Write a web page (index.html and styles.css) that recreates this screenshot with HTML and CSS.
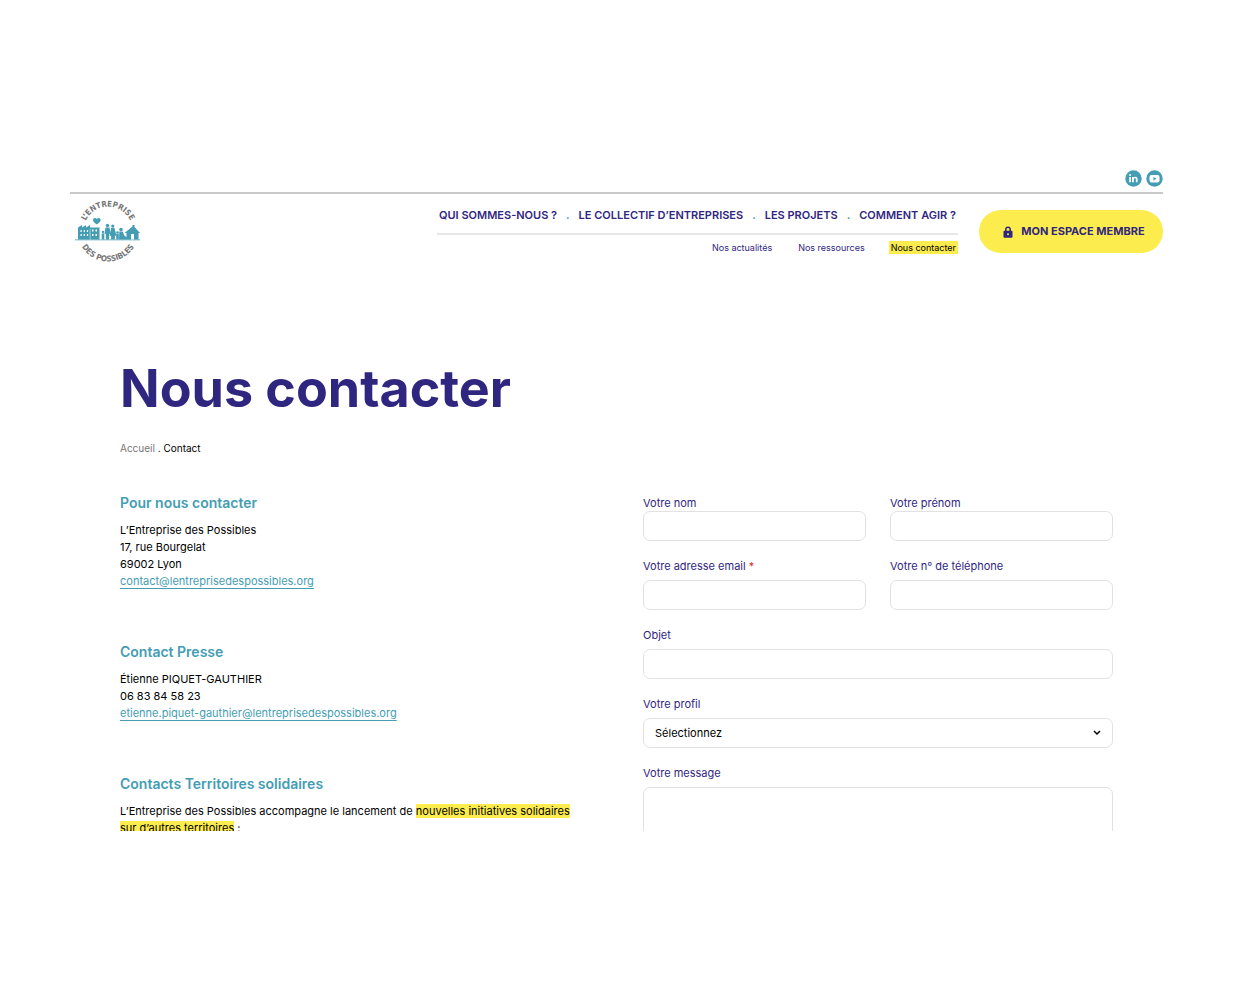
FILE: index.html
```html
<!DOCTYPE html>
<html lang="fr">
<head>
  <meta charset="UTF-8">
  <meta name="viewport" content="width=device-width, initial-scale=1">
  <title>Nous contacter - L’Entreprise des Possibles</title>
  <link rel="stylesheet" href="styles.css">
</head>
<body>
  <div class="page">
    <header>
      <div class="social">
        <a href="#" aria-label="LinkedIn">
          <svg viewBox="0 0 17 17" width="17" height="17">
            <circle cx="8.5" cy="8.5" r="8.2" fill="#449db3"/>
            <path d="M4.2 7h1.7v5.2H4.2zM7 7h1.6v.7c.4-.6 1-.9 1.8-.9 1.600 0 2.200 1 2.200 2.500v2.900h-1.700V9.600c0-.8-.2-1.300-.9-1.300-.8 0-1.200.5-1.200 1.400v2.500H7z" fill="#fff"/>
            <circle cx="5.050" cy="5.100" r="1" fill="#fff"/>
          </svg>
        </a>
        <a href="#" aria-label="YouTube">
          <svg viewBox="0 0 17 17" width="17" height="17">
            <circle cx="8.5" cy="8.5" r="8.2" fill="#449db3"/>
            <rect x="3.500" y="5" width="10" height="7.400" rx="2" fill="#fff"/>
            <path d="M7.400 7l3 1.700-3 1.700z" fill="#449db3"/>
          </svg>
        </a>
      </div>

      <div class="bar">
        <a class="logo" href="#" aria-label="L’Entreprise des Possibles">
          <svg viewBox="0 0 68 66" width="68" height="66">
            <defs>
              <path id="arcTop" d="M9.500 31a24.500 24.500 0 0 1 49 0"/>
              <path id="arcBottom" d="M3.500 31a30.500 30.500 0 0 0 61 0"/>
            </defs>
            <text class="logo-text"><textPath href="#arcTop" startOffset="50%">L’ENTREPRISE</textPath></text>
            <text class="logo-text"><textPath href="#arcBottom" startOffset="50%">DES POSSIBLES</textPath></text>
            <g fill="#449db3">
              <path d="M22.800 24.500c-2.500-2-3.800-3-3.800-4.600 0-2.200 2.800-2.700 3.800-.9 1-1.800 3.800-1.300 3.800.9 0 1.600-1.300 2.600-3.800 4.600z"/>
              <path d="M1 39.500h65v.8H1z"/>
              <path d="M4 39.500V27.500l4-2.500v2.500l4-2.500v2.500l4-2.500v2.500h9.500v12z"/>
              <!-- famille -->
              <circle cx="33.500" cy="25.500" r="1.700"/>
              <path d="M31.500 27.500h4l1 6-1.200.5-.3 5.500h-3l-.3-5.500-1.200-.5z"/>
              <circle cx="38.800" cy="26" r="1.600"/>
              <path d="M37.200 27.800h3.200l2.100 8h-1.600v3.700h-3.800v-3.700h-1.500z"/>
              <circle cx="29" cy="32" r="1.200"/>
              <path d="M27.700 33.500h2.600v6h-2.600z"/>
              <circle cx="43.500" cy="32.500" r="1.300"/>
              <path d="M42.200 33.800h2.600v5.700h-2.600z"/>
              <circle cx="47" cy="29.500" r="1.800"/>
              <path d="M45.300 31.500h3.300l1.700 4 2.700 2v2h-8z"/>
              <!-- maison -->
              <path d="M50.500 33l8-6.500V25h2v2l5.500 6h-1.500v6.500H52.500V33z"/>
            </g>
            <path d="M6.500 30h1.200v2H6.500zM9.700 30h1.200v2H9.700zM12.900 30h1.200v2h-1.200zM6.500 34h1.200v2H6.500zM9.700 34h1.200v2H9.700zM12.900 34h1.200v2h-1.200zM15.800 29h.5v10.500h-.5zM18 29.500h1.500v2H18zM21.500 29.500H23v2h-1.500zM18 34h1.500v2H18zM21.500 34H23v2h-1.500zM57 34h3v5.500h-3z" fill="#fff"/>
          </svg>
        </a>

        <nav>
          <ul class="menu">
            <li><a href="#">QUI SOMMES-NOUS ?</a></li>
            <li class="dot">.</li>
            <li><a href="#">LE COLLECTIF D’ENTREPRISES</a></li>
            <li class="dot">.</li>
            <li><a href="#">LES PROJETS</a></li>
            <li class="dot">.</li>
            <li><a href="#">COMMENT AGIR ?</a></li>
          </ul>
          <ul class="submenu">
            <li><a href="#">Nos actualités</a></li>
            <li><a href="#">Nos ressources</a></li>
            <li><a href="#" class="active">Nous contacter</a></li>
          </ul>
        </nav>

        <a class="member" href="#">
          <svg viewBox="0 0 10 12" width="10" height="12">
            <path d="M2.800 5.500V3.400a2.200 2.200 0 0 1 4.400 0v2.100" fill="none" stroke="#2f267f" stroke-width="1.500"/>
            <rect x=".5" y="4.800" width="9" height="7" rx="1" fill="#2f267f"/>
            <circle cx="5" cy="8.200" r="1" fill="#fdec4d"/>
          </svg>
          MON ESPACE MEMBRE
        </a>
      </div>
    </header>

    <main>
      <h1>Nous contacter</h1>
      <p class="breadcrumb"><a href="#">Accueil</a> . <span>Contact</span></p>

      <div class="columns">
        <div class="infos">
          <section>
            <h2>Pour nous contacter</h2>
            <p>L’Entreprise des Possibles<br>
              17, rue Bourgelat<br>
              69002 Lyon<br>
              <a href="#">contact@lentreprisedespossibles.org</a></p>
          </section>
          <section>
            <h2>Contact Presse</h2>
            <p>Étienne PIQUET-GAUTHIER<br>
              06 83 84 58 23<br>
              <a href="#">etienne.piquet-gauthier@lentreprisedespossibles.org</a></p>
          </section>
          <section>
            <h2>Contacts Territoires solidaires</h2>
            <p>L’Entreprise des Possibles accompagne le lancement de <mark>nouvelles initiatives solidaires<br>sur d’autres territoires</mark> :</p>
          </section>
        </div>

        <form>
          <div class="field half tight">
            <label for="nom">Votre nom</label>
            <input type="text" id="nom">
          </div>
          <div class="field half tight">
            <label for="prenom">Votre prénom</label>
            <input type="text" id="prenom">
          </div>
          <div class="field half">
            <label for="email">Votre adresse email <span class="required">*</span></label>
            <input type="email" id="email" required>
          </div>
          <div class="field half">
            <label for="tel">Votre n° de téléphone</label>
            <input type="tel" id="tel">
          </div>
          <div class="field">
            <label for="objet">Objet</label>
            <input type="text" id="objet">
          </div>
          <div class="field">
            <label for="profil">Votre profil</label>
            <div class="select">
              <select id="profil">
                <option>Sélectionnez</option>
              </select>
              <svg viewBox="0 0 8 6" width="8" height="6">
                <path d="M1 1l3 3 3-3" fill="none" stroke="#000" stroke-width="1.500"/>
              </svg>
            </div>
          </div>
          <div class="field">
            <label for="message">Votre message</label>
            <textarea id="message"></textarea>
          </div>
        </form>
      </div>
    </main>
  </div>
</body>
</html>
```

FILE: styles.css
```css
* { box-sizing: border-box; }

body {
  margin: 0;
  padding: 165px 71px 165px 70px;
  height: 100vh;
  background: #fff;
  color: #000;
  font-family: Inter, "Liberation Sans", sans-serif;
  font-size: 11px;
  line-height: 17px;
}

a { color: inherit; text-decoration: none; }
svg { display: block; }
ul { list-style: none; margin: 0; padding: 0; }

.page {
  height: 100%;
  overflow: hidden;
}

/* header */
.social {
  display: flex;
  justify-content: flex-end;
  gap: 4px;
  padding: 5px 0;
  border-bottom: 2px solid #c8c8c8;
}

.bar {
  display: flex;
  align-items: flex-start;
  color: #2f267f;
}

.logo { margin: 6px auto 0 4px; }
.logo-text {
  fill: #777;
  font-family: "Liberation Sans Narrow", "DejaVu Sans Condensed", sans-serif;
  font-size: 8px;
  font-weight: bold;
  text-anchor: middle;
}

nav {
  width: 521px;
  padding-top: 13px;
}
.menu {
  display: flex;
  justify-content: space-between;
  padding: 0 2px 9px;
  border-bottom: 2px solid #e6e6e6;
  font-weight: 600;
}
.dot { color: #449db3; }
.submenu {
  display: flex;
  justify-content: flex-end;
  gap: 22px;
  padding-top: 6px;
  font-size: 9px;
  line-height: 13px;
}
.submenu a {
  display: block;
  padding: 0 2px;
}
.submenu .active { background: #fdec4d; color: #000; }

.member {
  display: flex;
  align-items: center;
  justify-content: center;
  gap: 8px;
  width: 184px;
  height: 43px;
  margin: 16px 0 0 21px;
  padding-left: 6px;
  border-radius: 22px;
  background: #fdec4d;
  font-weight: 700;
}

/* contenu */
main { padding: 91px 50px 0; }

h1 {
  margin: 0;
  color: #2f267f;
  font-size: 52px;
  line-height: 64px;
}

.breadcrumb {
  margin: 19px 0 38px;
  font-size: 10px;
}
.breadcrumb a { color: #777; }

.columns {
  display: grid;
  grid-template-columns: 1fr 1fr;
  gap: 53px;
}

section { margin-bottom: 54px; }
h2 {
  margin: 0 0 12px;
  color: #449db3;
  font-size: 14px;
  font-weight: 600;
  line-height: 15px;
}
section p { margin: 0; white-space: nowrap; }
section a {
  color: #449db3;
  text-decoration: underline;
  text-underline-offset: 3px;
}
mark { background: #fdec4d; color: inherit; }

/* formulaire */
form {
  display: grid;
  grid-template-columns: 1fr 1fr;
  gap: 17px 24px;
  color: #2f267f;
}
.field {
  display: flex;
  flex-direction: column;
  gap: 6px;
  grid-column: span 2;
}
.half { grid-column: span 1; }
.tight { gap: 0; }
label { line-height: 16px; }
.required { color: #e22c2c; }

input, select, textarea {
  width: 100%;
  height: 30px;
  padding: 0 11px;
  border: 1px solid #e2e2e2;
  border-radius: 7px;
  background: #fff;
  color: #000;
  font: inherit;
}
textarea { height: 120px; resize: none; }

.select { position: relative; }
select { display: block; appearance: none; }
.select svg {
  position: absolute;
  top: 12px;
  right: 12px;
  pointer-events: none;
}
```
